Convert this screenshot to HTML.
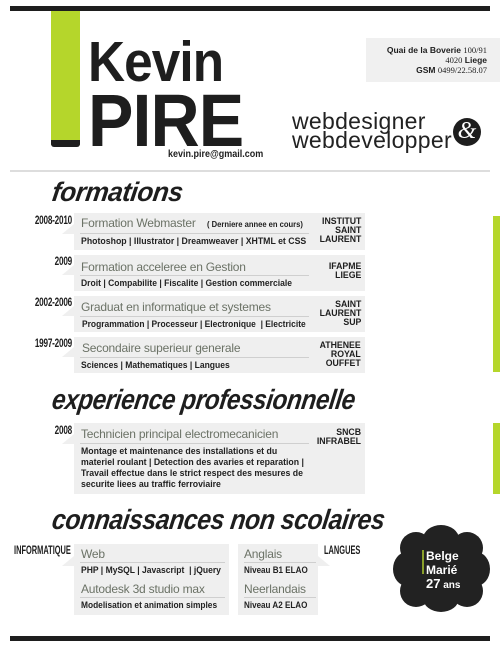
<!DOCTYPE html>
<html><head><meta charset="utf-8"><style>
*{margin:0;padding:0;box-sizing:border-box}
body{width:500px;height:647px;background:#fff;position:relative;overflow:hidden;font-family:"Liberation Sans",sans-serif;color:#1e1e1e}
div{white-space:nowrap}
.a{position:absolute}
.box{position:absolute;background:#efefef}
.tt{position:absolute;left:7px;font-size:12px;color:#6b7266;letter-spacing:-0.2px}
.ln{position:absolute;left:6px;height:1px;background:#cfcfcf}
.sub{position:absolute;left:7px;font-size:9.5px;font-weight:bold;color:#222;transform:scaleX(0.9);transform-origin:left top}
.inst{position:absolute;right:4px;font-size:9.5px;font-weight:bold;text-align:right;line-height:9px;color:#1e1e1e;transform:scaleX(0.92);transform-origin:right top}
.yr{position:absolute;font-size:12px;font-weight:bold;transform:scaleX(0.68);transform-origin:right top;letter-spacing:-0.3px;text-align:right;width:100px}
.h{position:absolute;font-weight:bold;font-style:italic;color:#1e1e1e;letter-spacing:-0.5px;transform-origin:left bottom}
.tri{position:absolute;width:0;height:0;border-top:10px solid transparent;border-right:12px solid #efefef}
.c{position:absolute;background:#222;border-radius:50%}
</style></head><body>
<div class="a" style="left:10px;top:6px;width:480px;height:5px;background:#1e1e1e"></div>
<div class="a" style="left:51px;top:11px;width:29px;height:134px;background:#b5d62b"></div>
<div class="a" style="left:51px;top:140px;width:29px;height:7px;background:#1e1e1e;border-radius:0 0 3px 3px"></div>
<div class="a" style="left:88px;top:34px;font-size:57px;font-weight:bold;letter-spacing:-1px;line-height:57px;transform:scaleX(0.9);transform-origin:left">Kevin</div>
<div class="a" style="left:88px;top:84px;font-size:74px;font-weight:bold;letter-spacing:-1px;line-height:74px;transform:scaleX(0.92);transform-origin:left">PIRE</div>
<div class="a" style="left:168px;top:149px;font-size:10px;font-weight:bold;transform:scaleX(0.9);transform-origin:left">kevin.pire@gmail.com</div>
<div class="a" style="left:366px;top:38px;width:134px;height:44px;background:#f0f0f0"></div>
<div class="a" style="left:366px;top:45px;width:121px;text-align:right;font-size:8.5px;line-height:10px"><b>Quai de la Boverie</b> <span style="font-family:'Liberation Serif'">100/91</span><br><span style="font-family:'Liberation Serif'">4020</span> <b>Liege</b><br><b>GSM</b> <span style="font-family:'Liberation Serif'">0499/22.58.07</span></div>
<div class="a" style="left:292px;top:112px;font-size:23px;line-height:19px;color:#222;letter-spacing:0.3px">webdesigner<br>webdevelopper</div>
<div class="a" style="left:453px;top:118px;width:28px;height:28px;border-radius:50%;background:#1e1e1e;color:#fff;font-family:'Liberation Serif';font-style:italic;font-size:24px;line-height:27px;text-align:center">&amp;</div>
<div class="a" style="left:10px;top:170px;width:480px;height:2px;background:#ddd"></div>

<div class="h" style="left:50px;top:177px;font-size:27px;transform:skewX(-8deg) scaleX(0.97)">formations</div>

<div class="yr" style="left:-28px;top:213px">2008-2010</div>
<div class="tri" style="left:62px;top:224px"></div>
<div class="box" style="left:74px;top:213px;width:291px;height:37px">
<div class="tt" style="top:3px">Formation Webmaster</div>
<div class="a" style="left:133px;top:7px;font-size:8px;font-weight:bold;transform:scaleX(0.95);transform-origin:left">( Derniere annee en cours)</div>
<div class="ln" style="top:20px;width:229px"></div>
<div class="sub" style="top:23px;transform:scaleX(0.92)">Photoshop | Illustrator | Dreamweaver | XHTML et CSS</div>
<div class="inst" style="top:4px">INSTITUT<br>SAINT<br>LAURENT</div></div>

<div class="yr" style="left:-28px;top:254px">2009</div>
<div class="tri" style="left:62px;top:265px"></div>
<div class="box" style="left:74px;top:255px;width:291px;height:36px">
<div class="tt" style="top:5px">Formation acceleree en Gestion</div>
<div class="ln" style="top:20px;width:229px"></div>
<div class="sub" style="top:23px">Droit | Compabilite | Fiscalite | Gestion commerciale</div>
<div class="inst" style="top:7px">IFAPME<br>LIEGE</div></div>

<div class="yr" style="left:-28px;top:295px">2002-2006</div>
<div class="tri" style="left:62px;top:306px"></div>
<div class="box" style="left:74px;top:296px;width:291px;height:36px">
<div class="tt" style="top:4px">Graduat en informatique et systemes</div>
<div class="ln" style="top:20px;width:229px"></div>
<div class="sub" style="top:23px;left:8px;transform:scaleX(0.89)">Programmation | Processeur | Electronique &nbsp;| Electricite</div>
<div class="inst" style="top:4px">SAINT<br>LAURENT<br>SUP</div></div>

<div class="yr" style="left:-28px;top:336px">1997-2009</div>
<div class="tri" style="left:62px;top:347px"></div>
<div class="box" style="left:74px;top:337px;width:291px;height:36px">
<div class="tt" style="top:4px;left:8px">Secondaire superieur generale</div>
<div class="ln" style="top:20px;width:229px"></div>
<div class="sub" style="top:23px">Sciences | Mathematiques | Langues</div>
<div class="inst" style="top:4px">ATHENEE<br>ROYAL<br>OUFFET</div></div>

<div class="a" style="left:493px;top:216px;width:7px;height:156px;background:#b5d62b"></div>
<div class="a" style="left:493px;top:423px;width:7px;height:71px;background:#b5d62b"></div>

<div class="h" style="left:50px;top:384px;font-size:28px;transform:skewX(-8deg) scaleX(0.87)">experience professionnelle</div>
<div class="yr" style="left:-28px;top:423px">2008</div>
<div class="tri" style="left:62px;top:434px"></div>
<div class="box" style="left:74px;top:423px;width:291px;height:71px">
<div class="tt" style="top:4px;left:7px">Technicien principal electromecanicien</div>
<div class="ln" style="top:20px;width:229px"></div>
<div class="sub" style="top:23px;line-height:11px;transform:scaleX(0.92)">Montage et maintenance des installations et du<br>materiel roulant | Detection des avaries et reparation |<br>Travail effectue dans le strict respect des mesures de<br>securite liees au traffic ferroviaire</div>
<div class="inst" style="top:5px">SNCB<br>INFRABEL</div></div>

<div class="h" style="left:50px;top:504px;font-size:28px;transform:skewX(-8deg) scaleX(0.885)">connaissances non scolaires</div>
<div class="a" style="left:14px;top:543px;font-size:12px;font-weight:bold;transform:scaleX(0.62);transform-origin:left">INFORMATIQUE</div>
<div class="tri" style="left:62px;top:556px"></div>
<div class="box" style="left:74px;top:544px;width:155px;height:71px">
<div class="tt" style="top:3px">Web</div>
<div class="ln" style="top:18px;width:145px"></div>
<div class="sub" style="top:21px;transform:scaleX(0.9)">PHP | MySQL | Javascript &nbsp;| jQuery</div>
<div class="tt" style="top:38px">Autodesk 3d studio max</div>
<div class="ln" style="top:53px;width:145px"></div>
<div class="sub" style="top:56px;transform:scaleX(0.88)">Modelisation et animation simples</div></div>
<div class="box" style="left:238px;top:544px;width:80px;height:71px">
<div class="tt" style="top:3px;left:6px">Anglais</div>
<div class="ln" style="top:18px;width:72px"></div>
<div class="sub" style="top:21px;left:6px;transform:scaleX(0.85)">Niveau B1 ELAO</div>
<div class="tt" style="top:38px;left:6px">Neerlandais</div>
<div class="ln" style="top:53px;width:72px"></div>
<div class="sub" style="top:56px;left:6px;transform:scaleX(0.85)">Niveau A2 ELAO</div></div>
<div class="a" style="left:318px;top:556px;width:0;height:0;border-top:10px solid transparent;border-left:12px solid #efefef"></div>
<div class="a" style="left:324px;top:543px;font-size:12px;font-weight:bold;transform:scaleX(0.62);transform-origin:left">LANGUES</div>

<div class="c" style="left:402px;top:532px;width:80px;height:74px"></div>
<div class="c" style="left:423px;top:525px;width:36px;height:28px"></div>
<div class="c" style="left:423px;top:584px;width:36px;height:28px"></div>
<div class="c" style="left:393px;top:552px;width:28px;height:34px"></div>
<div class="c" style="left:462px;top:552px;width:28px;height:34px"></div>
<div class="c" style="left:400px;top:532px;width:32px;height:32px"></div>
<div class="c" style="left:451px;top:532px;width:32px;height:32px"></div>
<div class="c" style="left:400px;top:575px;width:32px;height:32px"></div>
<div class="c" style="left:451px;top:575px;width:32px;height:32px"></div>
<div class="a" style="left:422px;top:550px;width:2px;height:24px;background:#8aa02a"></div>
<div class="a" style="left:426px;top:549px;color:#fff;font-weight:bold;font-size:12px;line-height:14px">Belge<br>Marié<br><span style="font-size:13px">27</span><span style="font-size:10px"> ans</span></div>

<div class="a" style="left:10px;top:636px;width:480px;height:5px;background:#1e1e1e"></div>
</body></html>
